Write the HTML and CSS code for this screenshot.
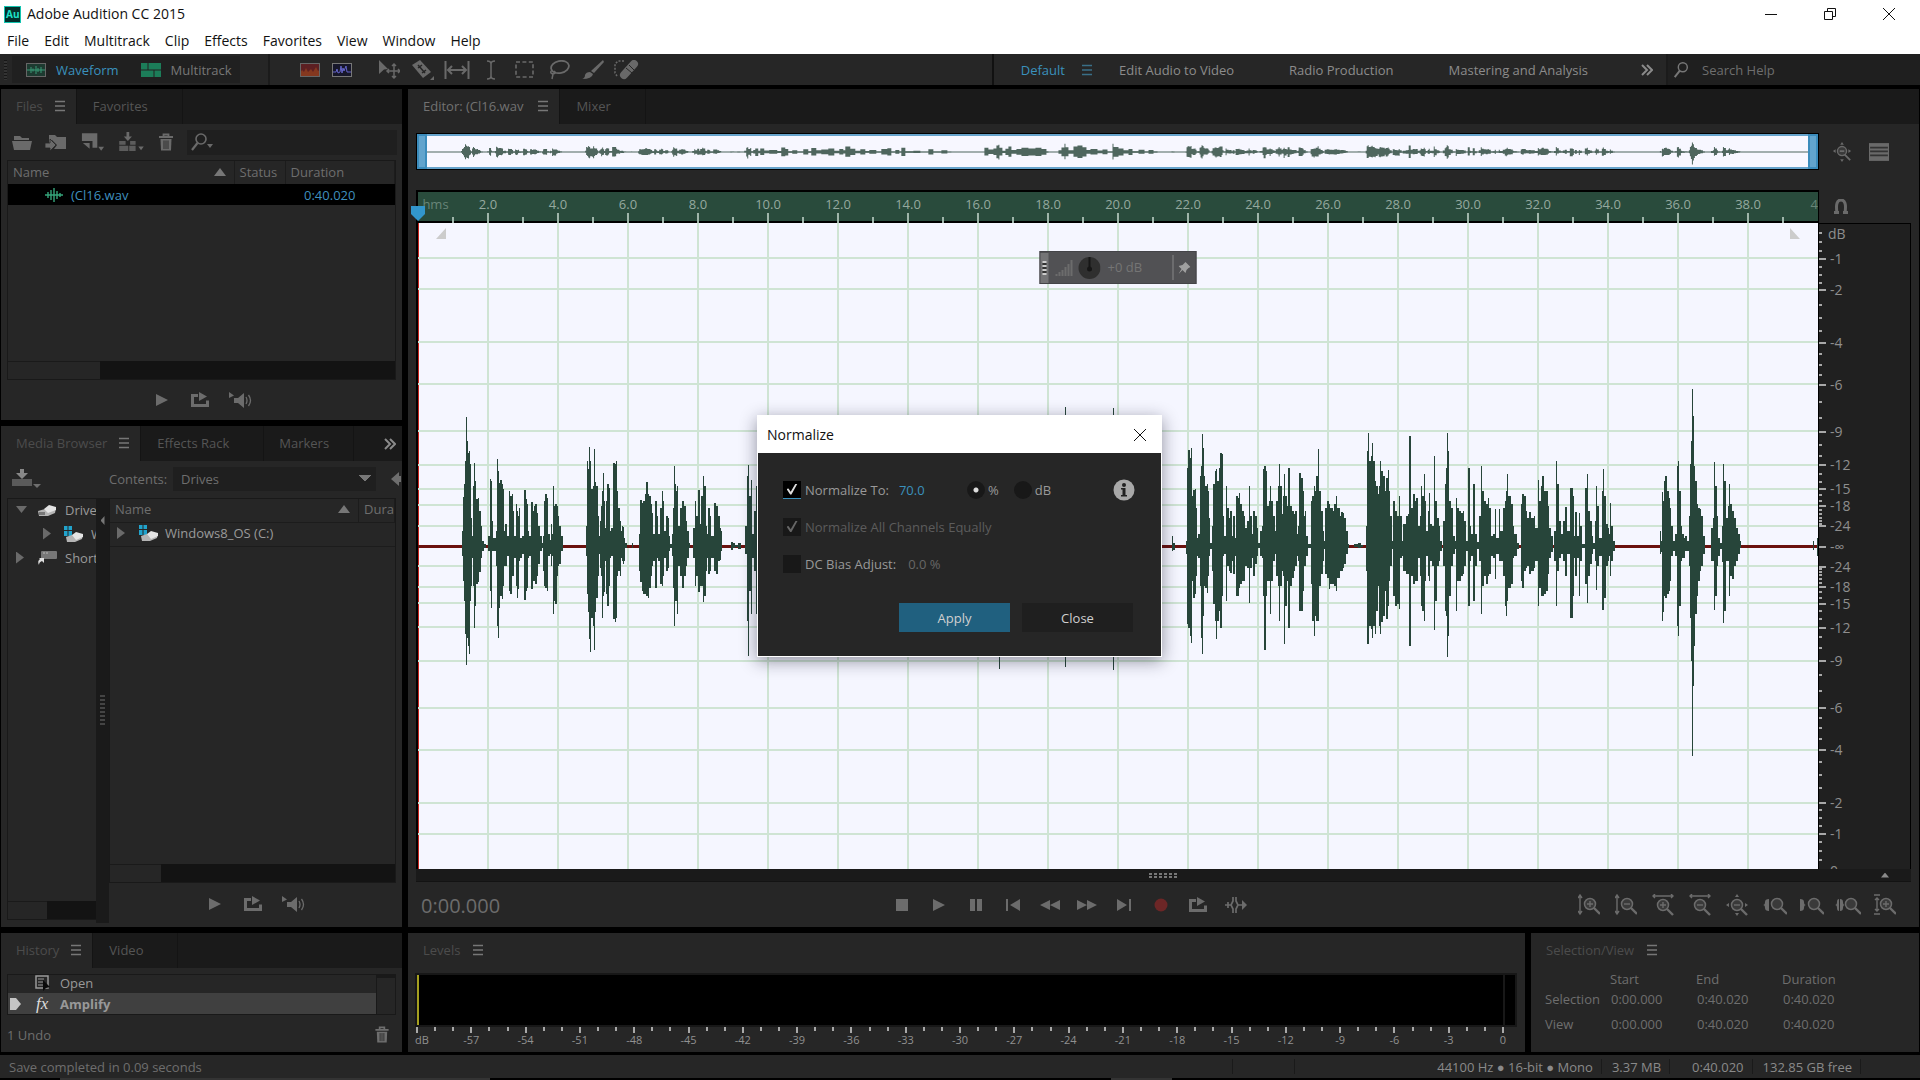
FILE: index.html
```html
<!DOCTYPE html>
<html lang="en">
<head>
  <meta charset="UTF-8" />
  <meta name="viewport" content="width=device-width, initial-scale=1.0" />
  <title>Adobe Audition CC 2015</title>
  <link rel="stylesheet" href="styles.css">
</head>
<body>
  <!-- Shared icons -->
  <svg class="sprite" aria-hidden="true">
    <symbol id="i-menu" viewBox="0 0 10 12"><path d="M0 1.5h10M0 6h10M0 10.5h10" stroke="currentColor" stroke-width="1.4"/></symbol>
    <symbol id="i-play" viewBox="0 0 20 20"><path d="M4 4l12 6-12 6z" fill="currentColor"/></symbol>
    <symbol id="i-loop" viewBox="0 0 20 20"><path d="M8 5.5H2.500v10h15v-5" fill="none" stroke="currentColor" stroke-width="3"/><path d="M9 2l8 4.500-8 4.500z" fill="currentColor"/></symbol>
    <symbol id="i-auto" viewBox="0 0 24 20"><path d="M1 2l5 3.500L1 8z M6 8h4l6-5v15l-6-5H6z" fill="currentColor"/><path d="M18 7q2 3.500 0 7M20.500 5q4 5.500 0 11" fill="none" stroke="currentColor" stroke-width="1.300"/></symbol>
    <symbol id="i-trash" viewBox="0 0 16 18"><path d="M1 4h14M5.500 4V1.500h5V4" fill="none" stroke="currentColor" stroke-width="1.800"/><path d="M2.500 6h11l-.5 11.500H3z" fill="currentColor"/><path d="M6 7.500v8.500M8 7.500v8.500M10 7.500v8.500" stroke="#262626" stroke-width=".9"/></symbol>
    <symbol id="i-search" viewBox="0 0 18 20"><circle cx="11" cy="7" r="5" fill="none" stroke="currentColor" stroke-width="1.600"/><path d="M7.500 11L2 18" stroke="currentColor" stroke-width="2.200"/></symbol>
    <symbol id="i-lens" viewBox="0 0 18 18"><circle cx="7" cy="7" r="5.500" fill="#3a3a3a" stroke="currentColor" stroke-width="1.500"/><path d="M11 11l6 6" stroke="currentColor" stroke-width="2.400"/></symbol>
    <symbol id="i-drive" viewBox="0 0 20 14"><path d="M1 8l7-2 11-1-1 5-7 3H2z" fill="#b4b4b4"/><path d="M7 6l5-4 7 2v3l-8 3z" fill="#e4e4e4"/><path d="M2 9h6v3H2z" fill="#777"/></symbol>
    <symbol id="i-win" viewBox="0 0 20 16"><path d="M1 0h3.500v4H1zM5.500 0H9v4H5.500zM1 5h3.500v5H1zM5.500 5H9v5H5.500z" fill="#21a3cc"/><path d="M3 11l6-2 11-1-1 5-7 3H4z" fill="#b4b4b4"/><path d="M9 9l4-3 7 2v3l-7 3z" fill="#e4e4e4"/></symbol>
  </svg>

  <header class="titlebar">
    <svg class="logo" viewBox="0 0 17 17" aria-hidden="true"><rect width="17" height="17" fill="#12c4b0"/><rect x="1" y="1" width="15" height="15" fill="#03302c"/><text x="2" y="12" class="logo-text">Au</text></svg>
    <span class="app-name">Adobe Audition CC 2015</span>
    <div class="window-buttons">
      <button aria-label="Minimize"><svg viewBox="0 0 14 14"><path d="M1 7.500h12"/></svg></button>
      <button aria-label="Restore"><svg viewBox="0 0 14 14"><path d="M1.500 4.500h8v8h-8zM4.500 4.500v-3h8v8h-3"/></svg></button>
      <button aria-label="Close window"><svg viewBox="0 0 14 14"><path d="M1 1l12 12M13 1L1 13"/></svg></button>
    </div>
  </header>
  <nav class="menubar">
    <button>File</button><button>Edit</button><button>Multitrack</button><button>Clip</button><button>Effects</button><button>Favorites</button><button>View</button><button>Window</button><button>Help</button>
  </nav>

  <div class="toolbar">
    <div class="modes">
      <span class="grip"></span>
      <button class="mode active"><svg viewBox="0 0 20 14"><rect x=".5" y=".5" width="19" height="13" fill="#1d3a30" stroke="#666"/><path d="M1 7h18M5 4v6M7 5.500v3M10 3v8M12 5v4M15 4v6" stroke="#3a9a76"/></svg>Waveform</button>
      <button class="mode"><svg viewBox="0 0 20 14"><rect width="20" height="14" fill="#1c7d59"/><path d="M7 0v7M0 7h20M13 7v7" stroke="#222"/></svg>Multitrack</button>
    </div>
    <div class="tools">
      <button class="swatch" aria-label="Spectral frequency display"><svg viewBox="0 0 20 14"><rect width="20" height="14" fill="#5c1f22"/><path d="M0 14v-4l2-3 2 2 2-4 2 4 3-3 2 3 3-5 2 4 2-1v7z" fill="#84381f"/><rect x=".5" y=".5" width="19" height="13" fill="none" stroke="#666"/></svg></button>
      <button class="swatch" aria-label="Spectral pitch display"><svg viewBox="0 0 20 14"><rect x=".5" y=".5" width="19" height="13" fill="#17172a" stroke="#777"/><path d="M1 9h3l1-3 1 4 2-1 1-6 1 7 1-5 1 3 2-5 1 6h4" fill="none" stroke="#6464c8"/></svg></button>
      <button class="after-swatch" aria-label="Move tool"><svg viewBox="0 0 22 20"><path d="M1 0l9 9-4 .5L1 14z" fill="currentColor"/><path d="M16 4v14M9 11h13M14 6l2-2 2 2M14 16l2 2 2-2M11 9l-2 2 2 2M20 9l2 2-2 2" fill="none" stroke="currentColor" stroke-width="1.500"/></svg></button>
      <button aria-label="Razor tool"><svg viewBox="0 0 22 20"><path d="M0 5l8-5 11 12-8 6z" fill="currentColor"/><path d="M6 5l7 8M6 8l4-3M10 13l4-3" stroke="#262626" stroke-width="1.500"/><path d="M22 16v4h-4z" fill="currentColor"/></svg></button>
      <button aria-label="Slip tool"><svg class="wide" viewBox="0 0 26 20"><path d="M1.500 1v18M24.500 1v18M4 10h18M8 6l-4 4 4 4M18 6l4 4-4 4" fill="none" stroke="currentColor" stroke-width="2"/></svg></button>
      <button aria-label="Time selection tool"><svg viewBox="0 0 22 20"><path d="M7 1q4 0 4 3v12q0 3-4 3M15 1q-4 0-4 3v12q0 3 4 3" fill="none" stroke="currentColor" stroke-width="1.500"/></svg></button>
      <button aria-label="Marquee selection tool"><svg viewBox="0 0 22 20"><rect x="2" y="2" width="17" height="15" fill="none" stroke="currentColor" stroke-width="1.600" stroke-dasharray="4 2.400"/></svg></button>
      <button aria-label="Lasso selection tool"><svg viewBox="0 0 22 20"><ellipse cx="12" cy="7" rx="9" ry="6" transform="rotate(-12 12 7)" fill="none" stroke="currentColor" stroke-width="1.800"/><path d="M4 10q-3 3 1 4 4-1 1-3M5 14l-1 5" fill="none" stroke="currentColor" stroke-width="1.500"/></svg></button>
      <button aria-label="Paintbrush selection tool"><svg viewBox="0 0 22 20"><path d="M21 0l1 2-10 11-3-2z" fill="currentColor"/><path d="M8 12l3 2q-1 5-11 5 3-1 3-4 1-3 5-3z" fill="currentColor"/></svg></button>
      <button aria-label="Spot healing brush"><svg class="wide" viewBox="0 0 26 20"><path d="M10 15L20 4" stroke="currentColor" stroke-width="8" stroke-linecap="round"/><path d="M12 8l6 5M15 5l5 5" stroke="#262626"/><path d="M10 1H4L1 4v9l2 3" fill="none" stroke="currentColor" stroke-width="1.500" stroke-dasharray="2 1.500"/></svg></button>
    </div>
    <div class="workspaces">
      <button class="active">Default</button>
      <button class="panel-menu blue" aria-label="Workspace menu"><svg><use href="#i-menu"/></svg></button>
      <button>Edit Audio to Video</button><button>Radio Production</button><button>Mastering and Analysis</button>
      <button class="more" aria-label="More workspaces"><svg viewBox="0 0 12 12"><path d="M1 1l5 5-5 5M6 1l5 5-5 5"/></svg></button>
    </div>
    <label class="help-search"><svg><use href="#i-search"/></svg><input type="text" placeholder="Search Help" aria-label="Search Help"></label>
  </div>

  <main class="workspace">
    <div class="left-column">
      <section class="panel files">
        <div class="tabs">
          <button class="tab selected">Files<svg><use href="#i-menu"/></svg></button>
          <button class="tab">Favorites</button>
        </div>
        <div class="file-tools">
          <button aria-label="Open file"><svg viewBox="0 0 20 18"><path d="M2 7V3h6l2 2h7v2z M0 8h20l-2 9H2z" fill="currentColor"/></svg></button>
          <button aria-label="Import file"><svg class="import" viewBox="0 0 22 18"><path d="M4 2h6l2 2h9v12H9l3-4-5-5v3H4z" fill="currentColor"/><path d="M0 10h5V6l6 6-6 6v-3H0z" fill="currentColor" stroke="#262626" stroke-width=".8"/></svg></button>
          <button aria-label="New file"><svg class="wide" viewBox="0 0 26 20"><path d="M2 1h16v15h-5V9H2z" fill="currentColor"/><path d="M3 11h7v6z" fill="currentColor"/><path d="M19 15h6l-3 4z" fill="currentColor"/></svg></button>
          <button aria-label="Insert into multitrack"><svg class="insert" viewBox="0 0 27 22"><path d="M0 10h7v4H0zM12 10h6v4h-6zM0 15h10v6H0zM11 15h7v6h-7z" fill="currentColor" opacity=".8"/><path d="M8 0h3v5h3l-4.500 5L5 5h3zM21 16h6l-3 4z" fill="currentColor"/></svg></button>
          <button aria-label="Delete file"><svg class="small"><use href="#i-trash"/></svg></button>
          <label class="file-search"><svg viewBox="0 0 24 20"><circle cx="11" cy="7" r="5" fill="none" stroke="currentColor" stroke-width="1.600"/><path d="M7.500 11L2 18" stroke="currentColor" stroke-width="2.200"/><path d="M17 12h6l-3 4z" fill="currentColor"/></svg><input type="text" aria-label="Search files"></label>
        </div>
        <div class="list-box">
          <table class="file-table">
            <thead><tr><th class="c-name"><div>Name<svg viewBox="0 0 12 8"><path d="M0 8l6-8 6 8z"/></svg></div></th><th class="c-status">Status</th><th>Duration</th></tr></thead>
            <tbody><tr><td><div class="wav"><svg viewBox="0 0 18 14"><path d="M0 7h18M3 4v6M6 2v10M9 0v14M12 3v8M15 5v4" stroke="#35a57b" stroke-width="1.400"/></svg>(Cl16.wav</div></td><td></td><td class="dur">0:40.020</td></tr></tbody>
          </table>
          <div class="hscroll"><span class="thumb"></span></div>
        </div>
        <div class="preview">
          <button aria-label="Play file"><svg><use href="#i-play"/></svg></button>
          <button aria-label="Loop file"><svg><use href="#i-loop"/></svg></button>
          <button aria-label="Auto-play file"><svg class="auto"><use href="#i-auto"/></svg></button>
        </div>
      </section>

      <section class="panel media">
        <div class="tabs">
          <button class="tab selected">Media Browser<svg><use href="#i-menu"/></svg></button>
          <button class="tab effects">Effects Rack</button>
          <button class="tab markers">Markers</button>
          <button class="more" aria-label="More panels"><svg viewBox="0 0 12 12"><path d="M1 1l5 5-5 5M6 1l5 5-5 5"/></svg></button>
        </div>
        <div class="media-tools">
          <button class="shortcut" aria-label="Shortcuts"><svg viewBox="0 0 30 20"><rect y="10" width="20" height="7" fill="#5a5a5a"/><path d="M8 0h4v4h4l-6 6-6-6h4z" fill="#888"/><path d="M21 15h8l-4 4z" fill="currentColor"/></svg></button>
          <label for="contents">Contents:</label>
          <select id="contents"><option>Drives</option></select>
          <button class="back" aria-label="Back"><svg viewBox="0 0 10 14"><path d="M0 7l8-7v4h2v6H8v4z" fill="currentColor"/></svg></button>
        </div>
        <div class="media-body">
          <div class="tree">
            <ul>
              <li><span class="arrow down"></span><svg><use href="#i-drive"/></svg><span class="label">Drives</span></li>
              <li class="child"><span class="arrow"></span><svg><use href="#i-win"/></svg><span class="label">W</span></li>
              <li><span class="arrow"></span><svg viewBox="0 0 20 16"><rect x="4" y="1" width="16" height="8" rx="1" fill="#777"/><path d="M6 3h2M9 3h2" stroke="#bbb"/><path d="M2 8h5v5l-2-2q-3 1-3 4-2-4 1-6z" fill="#ddd"/></svg><span class="label">Shortcuts</span></li>
            </ul>
            <div class="hscroll tree-scroll"><span class="thumb"></span></div>
          </div>
          <div class="divider"><span class="collapse"></span><span class="handle"></span></div>
          <div class="contents">
            <div class="contents-box">
              <table class="drive-table">
                <thead><tr><th><div>Name<svg viewBox="0 0 12 8"><path d="M0 8l6-8 6 8z"/></svg></div></th><th class="c-dura">Duration</th></tr></thead>
                <tbody><tr><td colspan="2"><div class="drive"><span class="arrow"></span><svg><use href="#i-win"/></svg>Windows8_OS (C:)</div></td></tr></tbody>
              </table>
              <div class="hscroll drive-scroll"><span class="thumb"></span></div>
            </div>
            <div class="preview">
              <button aria-label="Play media"><svg><use href="#i-play"/></svg></button>
              <button aria-label="Loop media"><svg><use href="#i-loop"/></svg></button>
              <button aria-label="Auto-play media"><svg class="auto"><use href="#i-auto"/></svg></button>
            </div>
          </div>
        </div>
      </section>
    </div>

    <section class="panel editor">
      <div class="tabs">
        <button class="tab selected light">Editor: (Cl16.wav<svg><use href="#i-menu"/></svg></button>
        <button class="tab">Mixer</button>
      </div>
      <div class="editor-grid">
        <div class="overview">
          <svg viewBox="0 0 1400 30" preserveAspectRatio="none"><path id="overviewPath" transform="translate(0 15) scale(1 .06)"/><path d="M0 15h1400" class="overview-line"/></svg>
          <span class="ov-handle"></span><span class="ov-handle right"></span>
        </div>
        <div class="overview-tools">
          <button aria-label="Zoom out full"><svg viewBox="0 0 20 22"><circle cx="10" cy="10" r="5" fill="#3a3a3a" stroke="currentColor" stroke-width="1.500"/><path d="M7.500 10h5M13 14l6 6" stroke="currentColor" stroke-width="2"/><path d="M8 3l2-3 2 3zM8 19l2 3 2-3zM3 8l-3 2 3 2zM17 8l3 2-3 2z" fill="currentColor"/></svg></button>
          <button aria-label="Display options"><svg viewBox="0 0 18 18"><rect x="0" y="1" width="18" height="16" fill="currentColor"/><path d="M1 5h16M1 8.500h16M1 12h16" stroke="#333" stroke-width="1.500"/></svg></button>
        </div>

        <div class="time-ruler">
          <div class="time-labels" id="timeLabels"></div>
          <svg id="timeTicks"></svg>
          <svg class="playhead" viewBox="0 0 16 15"><path d="M1 0h14v8l-7 7-7-7z"/></svg>
        </div>
        <div class="snap"><button aria-label="Toggle snapping"><svg viewBox="0 0 14 16"><path d="M3 14q-2-13 4-13t4 13" fill="none" stroke="currentColor" stroke-width="3"/><path d="M0 12h5v3H0zM9 12h5v3H9z" fill="currentColor"/></svg></button></div>

        <div class="wave">
          <svg id="grid"></svg>
          <svg viewBox="0 -323 1400 646" preserveAspectRatio="none"><path id="wavePath"/></svg>
          <span class="fade left"></span><span class="fade right"></span>
          <div class="hud">
            <span class="hud-grip"></span>
            <svg viewBox="0 0 46 28"><path d="M2 22v-2M5 22v-4M8 22v-6M11 22v-9M14 22v-12M17 22V6" stroke="#6c6c6c" stroke-width="2"/><circle cx="35" cy="14" r="11" fill="#2f2f2f"/><path d="M35 3v10" stroke="#161616" stroke-width="2"/><circle cx="35" cy="15" r="2.500" fill="#161616"/></svg>
            <span class="gain">+0 dB</span>
            <button aria-label="Pin"><svg viewBox="0 0 12 12"><path d="M7 0l5 5-2 1-2 2-1 3-3-3-4 4 3-5-3-3 4-1 2-2z"/></svg></button>
          </div>
        </div>
        <div class="db-ruler"><svg id="dbRuler"></svg></div>
        <div class="strip"><span class="strip-grip"></span><span class="strip-arrow"></span></div>
      </div>

      <div class="transport">
        <span class="time">0:00.000</span>
        <div class="transport-buttons">
          <button aria-label="Stop"><svg viewBox="0 0 20 20"><path d="M4 4h12v12H4z" fill="currentColor"/></svg></button>
          <button aria-label="Play"><svg><use href="#i-play"/></svg></button>
          <button aria-label="Pause"><svg viewBox="0 0 20 20"><path d="M4 4h5v12H4zM11 4h5v12h-5z" fill="currentColor"/></svg></button>
          <button aria-label="Previous"><svg viewBox="0 0 20 20"><path d="M3 4h2v12H3zM17 4v12l-10-6z" fill="currentColor"/></svg></button>
          <button aria-label="Rewind"><svg viewBox="0 0 20 20"><path d="M10 5v10l-10-5zM20 5v10l-10-5z" fill="currentColor"/></svg></button>
          <button aria-label="Fast forward"><svg viewBox="0 0 20 20"><path d="M0 5v10l10-5zM10 5v10l10-5z" fill="currentColor"/></svg></button>
          <button aria-label="Next"><svg viewBox="0 0 20 20"><path d="M15 4h2v12h-2zM3 4v12l10-6z" fill="currentColor"/></svg></button>
          <button class="record" aria-label="Record"><svg viewBox="0 0 20 20"><circle cx="10" cy="10" r="6.500" fill="currentColor"/></svg></button>
          <button aria-label="Loop"><svg><use href="#i-loop"/></svg></button>
          <button aria-label="Skip selection"><svg class="skip" viewBox="0 0 22 20"><path d="M0 10h6M3 7v6M8 2v4l-2 4 2 4v4M11 2v4l2 4-2 4v4M13 10h6" fill="none" stroke="currentColor" stroke-width="1.700"/><path d="M17 5l5 5-5 5z" fill="currentColor"/></svg></button>
        </div>
        <div class="zoom-buttons">
          <button aria-label="Zoom in amplitude"><svg viewBox="0 0 22 22"><path d="M2 2v17M0 4l2-3 2 3M0 17l2 3 2-3" class="thin"/><use href="#i-lens" x="5" y="3" width="18" height="18"/><path d="M9 10h6M12 7v6" class="thin"/></svg></button>
          <button aria-label="Zoom out amplitude"><svg viewBox="0 0 22 22"><path d="M2 2v17M0 4l2-3 2 3M0 17l2 3 2-3" class="thin"/><use href="#i-lens" x="5" y="3" width="18" height="18"/><path d="M9 10h6" class="thin"/></svg></button>
          <button aria-label="Zoom in time"><svg viewBox="0 0 22 22"><path d="M1 2h20M3 0L1 2l2 2M19 0l2 2-2 2" class="thin"/><use href="#i-lens" x="4" y="4" width="18" height="18"/><path d="M8 11h6M11 8v6" class="thin"/></svg></button>
          <button aria-label="Zoom out time"><svg viewBox="0 0 22 22"><path d="M1 2h20M3 0L1 2l2 2M19 0l2 2-2 2" class="thin"/><use href="#i-lens" x="4" y="4" width="18" height="18"/><path d="M8 11h6" class="thin"/></svg></button>
          <button aria-label="Zoom full"><svg viewBox="0 0 22 22"><path d="M9 3l2-3 2 3zM9 19l2 3 2-3zM3 9l-3 2 3 2zM19 9l3 2-3 2z" fill="currentColor"/><use href="#i-lens" x="4" y="4" width="18" height="18"/><path d="M8 11h6" class="thin"/></svg></button>
          <button aria-label="Zoom in point"><svg class="wide" viewBox="0 0 26 22"><path d="M8 5q-4 0-4 3 0 3-2 3 2 0 2 3 0 3 4 3z" fill="currentColor"/><use href="#i-lens" x="9" y="3" width="18" height="18"/></svg></button>
          <button aria-label="Zoom out point"><svg class="wide" viewBox="0 0 26 22"><path d="M2 5q4 0 4 3 0 3 2 3-2 0-2 3 0 3-4 3z" fill="currentColor"/><use href="#i-lens" x="9" y="3" width="18" height="18"/></svg></button>
          <button aria-label="Zoom to selection"><svg class="wide" viewBox="0 0 26 22"><path d="M4 5q-2 0-2 3 0 3-2 3 2 0 2 3 0 3 2 3zM5 5q3 0 3 3 0 3 2 3-2 0-2 3 0 3-3 3z" fill="currentColor"/><use href="#i-lens" x="9" y="3" width="18" height="18"/></svg></button>
          <button aria-label="Zoom to channel"><svg viewBox="0 0 22 22"><path d="M0 1h6M0 20h6M3 4v13M1 6l2-2 2 2M1 15l2 2 2-2" class="thin"/><use href="#i-lens" x="5" y="3" width="18" height="18"/><path d="M9 10h6M12 7v6" class="thin"/></svg></button>
        </div>
      </div>
    </section>

    <section class="panel history">
      <div class="tabs">
        <button class="tab selected">History<svg><use href="#i-menu"/></svg></button>
        <button class="tab">Video</button>
      </div>
      <div class="history-box">
        <ul>
          <li><span class="state"></span><svg viewBox="0 0 16 16"><path d="M1 1h12v12H1z" fill="none" stroke="#999" stroke-width="1.500"/><path d="M3 4h6M3 7h6M3 10h5" stroke="#999"/><path d="M8 5l7 7-4 1-3 3z" fill="#0a0a0a"/></svg>Open</li>
          <li class="current"><span class="state"><svg viewBox="0 0 11 12"><path d="M0 0h6l5 6-5 6H0z" fill="#c4c4c4"/></svg></span><i class="fx">fx</i>Amplify</li>
        </ul>
        <div class="vscroll"></div>
      </div>
      <div class="history-foot"><span>1 Undo</span><button aria-label="Delete history"><svg><use href="#i-trash"/></svg></button></div>
    </section>

    <div class="bottom-right">
      <section class="panel levels">
        <h2>Levels<svg><use href="#i-menu"/></svg></h2>
        <div class="meter"></div>
        <div class="meter-scale"><svg id="levelScale"></svg></div>
      </section>
      <section class="panel selection">
        <h2>Selection/View<svg><use href="#i-menu"/></svg></h2>
        <table>
          <thead><tr><td></td><th>Start</th><th>End</th><th>Duration</th></tr></thead>
          <tbody>
            <tr><th>Selection</th><td>0:00.000</td><td>0:40.020</td><td>0:40.020</td></tr>
            <tr class="view"><th>View</th><td>0:00.000</td><td>0:40.020</td><td>0:40.020</td></tr>
          </tbody>
        </table>
      </section>
    </div>
  </main>

  <footer class="statusbar">
    <span class="message">Save completed in 0.09 seconds</span>
    <span class="cell empty"></span>
    <span class="cell format">44100 Hz ● 16-bit ● Mono</span>
    <span class="cell">3.37 MB</span>
    <span class="cell length">0:40.020</span>
    <span class="cell">132.85 GB free</span>
  </footer>
  <div class="taskbar-edge"></div>

  <form class="dialog" role="dialog" aria-labelledby="dialogTitle" onsubmit="return false">
    <div class="dialog-title"><span id="dialogTitle">Normalize</span><button type="button" aria-label="Close dialog"><svg viewBox="0 0 14 14"><path d="M1 1l12 12M13 1L1 13"/></svg></button></div>
    <div class="dialog-body">
      <div class="row">
        <input type="checkbox" id="normTo" class="focus" checked><label for="normTo">Normalize To:</label>
        <input type="text" class="amount" value="70.0" aria-label="Normalize amount">
        <input type="radio" name="unit" id="pct" checked><label for="pct">%</label>
        <input type="radio" name="unit" id="db"><label for="db">dB</label>
        <svg class="info" viewBox="0 0 22 22"><circle cx="11" cy="11" r="10.500" fill="#a8a8a8"/><circle cx="11" cy="6" r="2" fill="#222"/><path d="M8 9h4.500v7H14v1.500H8V16h1.500v-5.500H8z" fill="#222"/></svg>
      </div>
      <div class="row"><input type="checkbox" id="allCh" checked disabled><label for="allCh">Normalize All Channels Equally</label></div>
      <div class="row"><input type="checkbox" id="dcBias"><label for="dcBias">DC Bias Adjust:</label><input type="text" class="bias" value="0.0 %" aria-label="DC bias" disabled></div>
      <div class="dialog-buttons"><button type="submit" class="primary">Apply</button><button type="button">Close</button></div>
    </div>
  </form>

  <script>
    // Peaks as "x,up,down"; each one holds until the next x
    const peaks = `0,0,0 44,15,10 45,49,35 46,62,55 47,85,88 48,129,119 49,105,92 50,93,100 51,95,108 52,82,55 53,28,40 54,10,12 55,60,40 56,83,82 57,65,60 58,47,38 60,48,36 61,35,26 63,20,12 64,5,5 66,2,2 68,0,0
      70,10,5 72,67,45 73,65,62 74,25,5 75,8,5 78,15,20 79,87,80 80,75,92 81,63,62 82,66,50 84,62,53 85,57,40 86,15,20 87,22,20 89,10,10 91,55,45 92,50,48 94,52,30 95,35,30 96,10,12 98,42,40 99,35,52 100,30,43 101,38,15 102,8,12 104,10,8 106,56,54 108,47,45 109,42,42 110,15,12 111,10,10 113,44,43 115,35,35 116,40,35 117,42,38 119,33,30 120,20,18 122,10,5 124,3,2 125,10,25 126,45,40 127,52,42 129,48,45 130,12,10 132,6,8 133,22,20 134,12,10 135,60,68 136,40,55 137,42,58 139,40,30 140,30,20 141,20,18 143,10,5 145,0,0
      168,20,10 169,85,48 170,77,66 171,99,93 172,85,106 173,57,72 175,60,80 176,97,104 177,64,66 178,60,52 180,30,30 181,10,8 182,25,22 183,40,30 184,55,72 185,73,50 186,45,46 187,18,15 188,45,48 189,62,60 191,58,40 192,15,12 193,18,10 195,83,73 197,82,76 198,85,72 199,55,30 200,38,25 202,25,30 203,15,12 204,20,15 205,19,18 206,8,15 207,3,2 209,0,0 214,3,2 215,0,0
      221,12,25 222,46,36 224,43,45 225,45,48 227,52,48 228,64,50 230,52,52 231,50,42 233,42,30 234,33,20 235,12,15 237,45,42 239,30,12 240,12,15 242,38,38 244,55,40 245,45,30 246,15,12 248,30,25 250,28,22 251,10,5 252,2,2 254,12,10 255,38,42 256,80,80 257,62,55 258,55,55 259,60,68 260,20,20 262,38,30 264,45,42 266,40,30 268,25,20 269,15,12 271,3,2 272,0,0 275,18,12 277,45,40 278,30,30 280,56,46 282,22,40 283,50,40 285,70,56 286,60,50 288,20,25 289,12,12 290,38,28 292,30,25 293,10,12 296,43,25 298,40,28 300,30,15 302,18,14 303,15,5 304,0,0 313,4,4 315,3,2 317,1,1 320,3,3 323,0,0
      327,20,8 329,70,75 330,81,110 331,50,45 333,66,68 334,12,12 336,35,25 338,60,68 341,20,20 343,60,50 347,25,20 352,32,28 360,18,16 364,75,70 368,50,60 371,12,12 375,30,28 380,8,8 386,45,40 391,14,14 394,66,58 399,28,24 404,40,36 411,60,60 417,20,20 422,48,40 426,28,24 428,90,80 433,55,50 438,20,20 443,45,40 448,16,14 452,35,30 459,8,8 464,48,40 470,62,58 474,10,10 478,35,30 482,8,8 484,72,66 488,12,12 496,20,18 503,5,5 511,45,40 516,10,10 524,30,26 530,3,3 534,0,0
      567,70,60 571,40,35 576,60,50 579,110,105 581,122,123 582,70,60 585,20,18 588,55,50 591,90,80 594,35,30 599,50,45 604,72,68 611,60,60 618,72,66 624,50,45 629,10,10 631,0,0 641,30,30 644,75,70 647,139,121 648,80,70 651,30,30 656,90,80 660,110,100 665,80,75 669,35,30 673,48,40 680,25,20 685,40,36 690,8,8 695,138,124 696,85,80 701,60,60 706,30,26 711,52,50 715,12,12 721,36,30 727,8,8 731,35,30 736,10,10 740,0,0 754,10,5 755,3,4 757,0,0
      768,5,8 769,78,78 770,96,82 772,88,90 773,98,97 774,50,35 775,56,52 777,57,48 778,38,30 779,8,10 780,12,12 782,70,40 783,80,92 784,112,108 785,98,70 786,70,40 787,60,42 789,62,47 790,55,30 791,28,10 792,3,3 794,20,25 795,62,58 797,75,75 798,77,93 799,65,75 801,78,65 802,93,82 804,92,50 805,30,10 806,10,8 808,60,55 809,38,20 811,28,25 812,35,27 814,10,15 815,30,28 817,8,10 818,50,50 820,48,50 821,53,42 822,42,38 824,35,35 826,30,35 827,18,20 829,25,22 831,60,57 832,30,22 834,12,12 835,35,30 837,30,18 839,18,10 840,3,2 842,15,10 844,20,12 845,77,50 846,80,104 848,75,50 849,40,35 851,45,35 852,60,68 853,45,35 855,30,15 857,15,8 858,45,30 860,60,40 861,82,75 862,60,40 864,32,25 865,50,30 866,72,98 867,50,60 869,40,35 870,78,82 872,40,40 874,35,32 876,32,25 877,35,20 879,12,10 880,20,15 881,73,65 883,68,65 885,55,45 886,30,20 887,35,20 888,10,10 890,2,2
      893,45,38 894,50,75 896,60,90 897,55,70 898,70,75 900,97,75 901,55,40 903,35,28 905,15,15 906,5,3 907,38,28 909,45,32 911,42,43 912,38,38 915,35,38 916,42,40 918,50,45 919,38,32 922,30,25 923,34,25 925,33,22 926,28,18 928,15,8 930,2,2 931,0,0 936,2,1 940,3,2 943,1,1 945,0,0
      948,20,25 949,95,98 950,113,98 951,85,80 953,90,83 954,103,92 955,85,80 957,65,88 958,60,65 960,52,40 961,60,80 962,85,88 963,75,76 965,70,70 967,55,45 968,68,73 970,76,60 971,55,35 972,30,20 974,5,3 975,45,50 977,35,60 979,30,58 981,50,63 982,30,12 984,5,10 985,22,25 988,30,28 990,32,28 991,110,100 993,38,30 995,52,38 997,45,35 998,48,35 1000,20,12 1002,30,30 1003,60,60 1004,50,65 1006,72,75 1007,45,35 1008,15,10 1010,35,30 1011,53,35 1012,22,15 1014,20,20 1016,90,84 1017,45,55 1019,28,20 1021,20,15 1022,5,5 1024,0,0 1025,25,20 1027,62,65 1028,78,70 1029,113,111 1030,95,90 1031,45,50 1033,38,20 1035,10,8 1037,5,3 1038,48,65 1039,38,35 1041,35,35 1043,33,30 1045,35,28 1046,25,20 1048,5,5 1050,78,60 1052,20,15 1053,12,10 1055,62,55 1057,12,20 1059,4,3
      1061,30,15 1063,80,68 1064,55,40 1066,45,30 1068,42,38 1070,48,30 1071,38,28 1073,10,10 1075,12,12 1077,37,33 1078,8,8 1081,37,15 1082,15,15 1085,38,30 1087,45,60 1088,55,70 1089,72,55 1090,50,42 1093,42,38 1095,20,12 1096,12,10 1099,3,3 1101,0,0 1103,42,35 1104,52,42 1106,50,25 1108,35,22 1109,28,20 1111,34,28 1113,28,25 1116,30,22 1117,18,15 1120,66,60 1121,45,42 1123,60,50 1124,70,50 1126,55,48 1128,55,45 1130,40,28 1131,18,12 1133,10,6 1135,0,0 1136,15,15 1138,85,60 1139,62,25 1141,25,12 1143,12,8 1145,25,15 1147,39,30 1149,15,8 1152,58,72 1155,50,50 1156,10,12 1157,34,30 1159,10,12 1161,33,50 1162,20,15 1164,2,2
      1167,58,38 1169,72,57 1170,35,30 1172,25,18 1174,10,8 1175,3,3 1177,25,15 1178,60,44 1179,40,20 1181,8,10 1184,55,64 1185,77,64 1186,50,52 1188,22,20 1190,18,15 1191,12,10 1192,43,30 1193,20,15 1195,5,5 1197,0,0
      1242,15,8 1243,5,6 1244,54,75 1245,45,66 1246,65,50 1247,70,52 1249,55,48 1251,48,45 1252,38,35 1253,20,10 1255,5,5 1257,12,10 1259,80,80 1260,85,90 1261,55,60 1263,20,15 1264,12,12 1266,8,12 1267,10,5 1269,5,5 1271,30,20 1272,82,72 1273,105,115 1274,157,210 1275,130,140 1276,80,100 1277,65,68 1279,42,50 1280,38,35 1282,37,25 1283,30,20 1285,10,8 1287,0,0 1293,18,15 1295,28,15 1296,84,64 1297,60,50 1299,30,20 1300,8,10 1302,3,3 1304,20,16 1305,82,77 1306,65,65 1308,28,15 1310,40,15 1311,62,50 1312,42,30 1314,35,33 1316,28,20 1318,18,15 1320,12,8 1322,5,2 1323,0,0 1395,5,4 1396,0,0 1399,8,10 1400,0,0`
      .split(/\s+/).map(p => p.split(',').map(Number));

    let path = '';
    for (let i = 0; i < peaks.length - 1; i++) {
      const [x, up, down] = peaks[i];
      if (up) path += `M${x} ${-up}H${peaks[i + 1][0]}V${down}H${x}Z`;
    }
    document.getElementById('wavePath').setAttribute('d', path);
    document.getElementById('overviewPath').setAttribute('d', path);

    // Position of a level in percent of the height, side is -1 (upper) or 1 (lower)
    const levelY = (db, side) => (50 + side * 50 * Math.pow(10, db / 20)) + '%';
    const line = (x1, y1, x2, y2, cls) => `<line x1="${x1}" y1="${y1}" x2="${x2}" y2="${y2}" class="${cls}"/>`;

    const labels = [1, 2, 4, 6, 9, 12, 15, 18, 24];
    const minor = [.25, .5, .75, 1.25, 1.5, 1.75, 2.5, 3, 3.5, 4.5, 5, 5.5, 7, 8, 10, 11, 13, 14, 16, 17, 19, 20, 21, 22, 23];
    let grid = '';
    let ruler = '<text x="9" y="15">dB</text><text x="11" y="100%" dy="7">0</text>';
    for (let s = 2; s <= 38; s += 2) grid += line(s / .4 + '%', 0, s / .4 + '%', '100%', 'grid-v');
    for (const side of [-1, 1]) {
      for (const n of labels) {
        const y = levelY(-n, side);
        grid += line(0, y, '100%', y, 'grid-h');
        ruler += line(0, y, 7, y, 'tick') + `<text x="11" y="${y}" dy="5">-${n}</text>`;
      }
      for (const n of minor) ruler += line(0, levelY(-n, side), 3, levelY(-n, side), 'tick');
    }
    grid += line(0, '50%', '100%', '50%', 'zero');
    ruler += line(0, '50%', 7, '50%', 'tick') + '<text x="11" y="50%" dy="5">-∞</text>';
    document.getElementById('grid').innerHTML = grid;
    document.getElementById('dbRuler').innerHTML = ruler;

    let times = '<span class="edge">hms</span>';
    let ticks = '';
    for (let s = 2; s <= 38; s += 2) times += `<span>${s}.0</span>`;
    for (let s = 1; s < 40; s++) ticks += line(s / .4 + '%', s % 2 ? 27 : 23, s / .4 + '%', 33, 'tick');
    document.getElementById('timeLabels').innerHTML = times + '<span class="edge last">4</span>';
    document.getElementById('timeTicks').innerHTML = ticks;

    let scale = '<text x="-2" y="17">dB</text>';
    for (let i = 0; i <= 60; i++) {
      const x = i / .6 + '%';
      scale += line(x, 0, x, i % 3 ? 4 : 6, 'tick');
      if (i % 3 === 0 && i) scale += `<text x="${x}" y="17" class="mid">${i - 60}</text>`;
    }
    document.getElementById('levelScale').innerHTML = scale;
  </script>
</body>
</html>
```
FILE: styles.css
```css
* { box-sizing: border-box; }
body {
  margin: 0;
  min-height: 100vh;
  display: flex;
  flex-direction: column;
  position: relative;
  background: #000;
  color: #6e6e6e;
  font: 13px/18px "Open Sans", "Noto Sans", sans-serif;
  overflow: hidden;
}
button {
  background: none;
  border: 0;
  padding: 0;
  color: inherit;
  font: inherit;
  display: flex;
  align-items: center;
  justify-content: center;
}
input, select { font: inherit; color: inherit; background: none; border: 0; margin: 0; padding: 0; min-width: 0; }
ul { list-style: none; margin: 0; padding: 0; }
svg { display: block; flex: none; }
.sprite { position: absolute; width: 0; height: 0; }
table { border-collapse: collapse; }
th { font-weight: normal; text-align: left; }
th, td { padding: 0; }

/* Window frame */
.titlebar {
  display: flex;
  align-items: center;
  height: 28px;
  padding-left: 4px;
  background: #fff;
  color: #111;
  font-size: 14px;
}
.logo { width: 17px; height: 17px; margin-right: 6px; }
.logo-text { font-size: 10px; font-weight: bold; fill: #1ee0c8; }
.window-buttons { display: flex; margin-left: auto; margin-right: 2px; }
.window-buttons button { width: 59px; height: 28px; }
.window-buttons svg, .dialog-title svg { width: 14px; height: 14px; fill: none; stroke: #111; }
.menubar {
  display: flex;
  gap: 15px;
  height: 26px;
  padding: 0 7px;
  background: #fff;
  color: #111;
  font-size: 14px;
}

/* Toolbar */
.toolbar {
  display: flex;
  align-items: stretch;
  height: 31px;
  background: #262626;
  color: #777;
}
.modes {
  display: flex;
  align-items: center;
  width: 270px;
  border-right: 2px solid #1b1b1b;
  padding: 2px 0;
}
.grip { width: 3px; height: 20px; margin: 0 5px 0 4px; background: repeating-linear-gradient(#161616 0 1px, #333 1px 3px); }
.mode { height: 27px; padding-left: 14px; padding-right: 8px; gap: 10px; background: #202020; }
.mode svg { width: 20px; height: 14px; }
.mode.active, .workspaces .active { color: #3a91bd; }
.tools { display: flex; align-items: center; gap: 12px; padding-left: 30px; color: #696969; }
.tools svg { width: 22px; height: 20px; }
.tools .swatch svg { width: 20px; height: 14px; }
.tools svg.wide { width: 26px; margin: 0 -2px; }
.after-swatch { margin-left: 14px; }
.workspaces {
  display: flex;
  align-items: center;
  margin-left: auto;
  border-left: 2px solid #111;
  padding-left: 27px;
  color: #8c8c8c;
}
.workspaces button { margin-right: 55px; }
.workspaces button.active { margin-right: 17px; }
.workspaces button.panel-menu { margin-right: 27px; color: #3a6f88; }
.workspaces button.more { margin-right: 13px; margin-left: -2px; }
.panel-menu svg { width: 10px; height: 12px; }
.more svg { width: 12px; height: 12px; fill: none; stroke: #8a8a8a; stroke-width: 2; }
.help-search {
  display: flex;
  align-items: center;
  gap: 12px;
  width: 254px;
  border-left: 2px solid #1b1b1b;
  padding-left: 4px;
  background: #1f1f1f;
}
.help-search svg { width: 18px; height: 18px; }
.help-search input { flex: 1; }
.help-search input::placeholder { color: #6e6e6e; opacity: 1; }

/* Panels */
.workspace {
  flex: 1;
  display: grid;
  grid-template: 1fr 119px / 401px 1fr;
  gap: 6px;
  padding: 4px 1px 3px;
  min-height: 0;
}
.left-column { display: flex; flex-direction: column; gap: 6px; min-height: 0; }
.panel { background: #262626; display: flex; flex-direction: column; min-width: 0; min-height: 0; overflow: hidden; }
.files { flex: 0 0 331px; }
.media { flex: 1; }
.tabs { display: flex; flex: none; height: 35px; background: #1a1a1a; }
.tab { padding: 0 34px 2px 16px; border-right: 1px solid #141414; color: #555; }
.tab.selected { background: #262626; color: #4c4c4c; padding: 0 11px 2px 15px; gap: 12px; }
.tab.light { color: #727272; gap: 15px; }
.tab svg, h2 svg { width: 10px; height: 12px; color: #777; }
h2 {
  display: flex;
  align-items: center;
  gap: 13px;
  height: 35px;
  margin: 0;
  padding: 0 0 2px 15px;
  font-size: 13px;
  font-weight: normal;
  color: #4c4c4c;
}

.file-tools { display: flex; align-items: center; flex: none; height: 36px; padding: 0 5px 0 11px; gap: 13px; color: #6a6a6a; }
.file-tools svg { width: 20px; height: 18px; }
.file-tools svg.import { width: 22px; }
.file-tools svg.wide { width: 25px; height: 20px; }
.file-tools svg.insert { width: 27px; height: 20px; }
.file-tools svg.small { width: 16px; }
.file-search { display: flex; align-items: center; flex: 1; height: 25px; background: #1f1f1f; padding-left: 3px; }
.file-search svg { width: 24px; height: 20px; }
.file-search input { flex: 1; }
.list-box { flex: 1; display: flex; flex-direction: column; margin: 0 6px; border: 1px solid #191919; }
.file-table, .drive-table { width: 100%; table-layout: fixed; }
.file-table th, .drive-table th { height: 23px; border-right: 1px solid #1c1c1c; padding: 0 0 2px 5px; overflow: hidden; white-space: nowrap; }
th div { display: flex; align-items: center; justify-content: space-between; padding-right: 8px; }
th div svg { width: 12px; height: 8px; fill: #777; }
.c-name { width: 226px; }
.c-status { width: 51px; }
.file-table td { height: 21px; background: #000; color: #3f8fbe; }
.wav { display: flex; align-items: center; gap: 8px; padding-left: 37px; }
.wav svg { width: 18px; height: 14px; }
.file-table td.dur { padding-left: 19px; }
.hscroll { height: 18px; margin-top: auto; background: #131313; }
.thumb { display: block; width: 92px; height: 100%; background: #262626; border-top: 1px solid #1a1a1a; }
.preview { display: flex; align-items: center; justify-content: center; flex: none; height: 40px; gap: 18px; color: #6c6c6c; }
.preview svg { width: 20px; height: 20px; }
.preview svg.auto { width: 24px; }

/* Media browser */
.tab.effects { padding-right: 34px; }
.tab.markers { padding: 0 24px 2px 15px; }
.tabs .more { margin-left: auto; width: 24px; }
.media-tools { display: flex; align-items: center; flex: none; height: 37px; padding: 0 0 2px 11px; overflow: hidden; }
.media-tools svg { width: 30px; height: 20px; }
.media-tools label { margin-left: 67px; width: 64px; }
.media-tools select {
  flex: none;
  width: 203px;
  height: 24px;
  padding-left: 8px;
  appearance: none;
  background: linear-gradient(to bottom right, #777 50%, transparent 50%) right 5px center / 6px 7px no-repeat, linear-gradient(to bottom left, #777 50%, transparent 50%) right 11px center / 6px 7px no-repeat, #1f1f1f;
}
.back { margin-left: 15px; }
.media-tools .back svg { width: 10px; height: 14px; }
.media-body { flex: 1; display: flex; min-height: 0; padding: 0 6px 4px 6px; color: #9a9a9a; }
.tree { flex: none; width: 89px; display: flex; flex-direction: column; margin-bottom: 3px; border: 1px solid #191919; border-right: 0; overflow: hidden; }
.tree li { display: flex; align-items: center; height: 24px; padding-left: 8px; padding-bottom: 3px; gap: 8px; white-space: nowrap; }
.tree li svg { width: 20px; height: 16px; margin-left: 5px; }
.tree li.child { padding-left: 35px; }
.tree li.child svg { margin-left: 4px; }
.label { flex: 1; min-width: 0; overflow: hidden; }
.arrow { flex: none; width: 8px; height: 12px; background: #6a6a6a; clip-path: polygon(0 0, 100% 50%, 0 100%); }
.arrow.down { width: 11px; height: 7px; margin-right: -3px; clip-path: polygon(0 0, 100% 0, 50% 100%); }
.tree-scroll .thumb { width: 39px; }
.divider { flex: none; width: 13px; display: flex; flex-direction: column; align-items: center; justify-content: space-between; padding: 18px 0 198px; background: #1a1a1a; }
.collapse { width: 4px; height: 9px; background: #777; clip-path: polygon(100% 0, 100% 100%, 0 50%); }
.handle { width: 5px; height: 30px; background: repeating-linear-gradient(#444 0 2px, #1a1a1a 2px 4px); }
.contents { flex: 1; min-width: 0; display: flex; flex-direction: column; }
.contents .preview { padding-top: 2px; padding-left: 4px; }
.contents-box { flex: 1; display: flex; flex-direction: column; border: 1px solid #191919; }
.drive-table th { color: #6e6e6e; }
.c-dura { width: 36px; }
.drive-table td { height: 24px; padding-bottom: 2px; border: solid #1c1c1c; border-width: 1px 0; }
.drive { display: flex; align-items: center; gap: 7px; padding-left: 7px; }
.drive svg { width: 20px; height: 16px; margin-left: 6px; }
.drive-scroll .thumb { width: 51px; }

/* Editor */
.editor-grid {
  flex: 1;
  min-height: 0;
  display: grid;
  grid-template: 57px 33px 1fr 13px / 1fr 92px;
  margin: 9px 8px 0;
}
.overview {
  position: relative;
  height: 37px;
  border: 1px solid #000;
  background: #f7f7ff;
  box-shadow: inset 0 2px #66a3cb, inset 0 -2px #66a3cb;
  display: flex;
  align-items: center;
}
.overview svg { width: 100%; height: 30px; fill: #4f665e; }
.overview-line { stroke: #4f665e; }
.ov-handle { position: absolute; top: 0; bottom: 0; left: 0; width: 10px; background: #62a4cd; border: 2px solid #3b8cbc; }
.ov-handle.right { left: auto; right: 0; }
.overview-tools { display: flex; align-items: center; height: 37px; gap: 17px; padding-left: 13px; color: #6a6a6a; }
.overview-tools svg { width: 20px; height: 20px; }
.time-ruler { position: relative; border: solid #000; border-width: 2px 1px 2px 2px; background: #294b3c; }
.time-labels { display: flex; padding-top: 3px; color: #95a99f; text-align: center; }
.time-labels span { flex: 0 0 5%; }
.time-labels .edge { flex-basis: 2.5%; overflow: hidden; color: #688578; }
.time-labels .last { text-align: right; }
#timeTicks { position: absolute; left: 0; top: -2px; width: 100%; height: 33px; }
#timeTicks .tick { stroke: #9fb5aa; stroke-width: 2; shape-rendering: crispEdges; }
.playhead { position: absolute; left: -8px; bottom: 0; width: 16px; height: 15px; fill: #3296cc; z-index: 1; }
.snap { display: flex; align-items: center; padding-left: 15px; color: #6a6a6a; }
.snap svg { width: 14px; height: 16px; }
.wave { position: relative; background: #f5f6ff; border: solid #000; border-width: 0 1px 0 2px; box-shadow: inset 1px 0 #c9241d; overflow: hidden; min-height: 0; }
.wave > svg { position: absolute; inset: 0; width: 100%; height: 100%; shape-rendering: crispEdges; }
.grid-v, .grid-h { stroke: #cfe4d4; stroke-width: 2; }
.zero { stroke: #6b120f; stroke-width: 3; }
#wavePath { fill: #27453a; }
.fade { position: absolute; top: 5px; left: 18px; width: 10px; height: 11px; background: #ccc; clip-path: polygon(100% 0, 100% 100%, 0 100%); }
.fade.right { left: auto; right: 18px; clip-path: polygon(0 0, 100% 100%, 0 100%); }
.hud {
  position: absolute;
  top: 28px;
  left: 50%;
  transform: translateX(-50%);
  width: 157px;
  height: 33px;
  display: flex;
  align-items: center;
  border: 1px solid #444448;
  background: #515154;
  color: #757575;
}
.hud > svg { width: 46px; height: 28px; margin-left: 6px; margin-right: 7px; }
.gain { padding-bottom: 2px; }
.hud-grip { width: 8px; height: 30px; background: repeating-linear-gradient(#ccc 0 2px, #333 2px 4px) center / 4px 14px no-repeat #747476; }
.hud button { margin-left: auto; width: 23px; height: 25px; border-left: 1px solid #888; }
.hud button svg { width: 12px; height: 12px; fill: #a0a0a0; }
.db-ruler { position: relative; background: #202020; border: solid #000; border-width: 1px 1px 0 0; overflow: hidden; }
.db-ruler svg { position: absolute; inset: 0; width: 100%; height: 100%; fill: #8e8e8e; font-size: 14px; }
.db-ruler .tick, .meter-scale .tick { stroke: #a8a8a8; stroke-width: 2; shape-rendering: crispEdges; }
.strip { grid-column: 1 / -1; position: relative; background: #1a1a1a; border-bottom: 1px solid #131313; display: flex; align-items: center; justify-content: center; }
.strip-grip { width: 30px; height: 5px; background: linear-gradient(#1a1a1a, #1a1a1a) center / 100% 1px no-repeat, repeating-linear-gradient(90deg, #777 0 3px, #1a1a1a 3px 5px); }
.strip-arrow { position: absolute; right: 22px; width: 8px; height: 5px; background: #8a8a8a; clip-path: polygon(50% 0, 100% 100%, 0 100%); }
.transport { display: flex; align-items: center; flex: none; height: 45px; padding: 0 23px 0 13px; color: #6c6c6c; }
.time { font-size: 20px; line-height: 28px; width: 471px; padding-top: 2px; }
.transport-buttons { display: flex; gap: 17px; }
.transport-buttons svg { width: 20px; height: 20px; }
.transport-buttons svg.skip { width: 22px; }
.record { color: #6c2626; }
.zoom-buttons { display: flex; gap: 15px; margin-left: auto; }
.zoom-buttons svg { width: 22px; height: 22px; }
.zoom-buttons svg.wide { width: 26px; margin: 0 -2px; }
.thin { fill: none; stroke: currentColor; stroke-width: 1.4; }

/* History */
.history-box { display: flex; flex: none; height: 41px; margin: 6px 6px 0; border: 1px solid #191919; }
.history-box ul { flex: 1; color: #999; }
.history-box li { display: flex; align-items: center; height: 18px; padding-bottom: 3px; }
.history-box li > svg { width: 16px; height: 16px; margin: 0 9px 0 8px; }
.history-box .current { height: 21px; padding-bottom: 0; background: #404040; font-weight: bold; }
.state { width: 19px; padding-left: 2px; }
.state svg { width: 11px; height: 12px; }
.fx { width: 24px; margin-left: 9px; font: italic 17px/20px "Liberation Serif", serif; color: #ddd; }
.vscroll { width: 19px; border-left: 1px solid #191919; border-top: 3px solid #191919; }
.history-foot { display: flex; align-items: center; justify-content: space-between; flex: 1; padding: 2px 12px 0 6px; }
.history-foot svg { width: 16px; height: 17px; }

/* Levels and selection */
.bottom-right { display: flex; gap: 6px; min-width: 0; }
.levels { flex: 1; }
.meter { height: 54px; margin: 5px 8px 0 7px; border: 2px solid #171717; background: linear-gradient(#181818, #181818) right 10px top / 2px 100% no-repeat, #000; box-shadow: inset 2px 0 #a5a020; }
.meter-scale { height: 22px; padding: 0 22px 0 9px; }
.meter-scale svg { width: 100%; height: 22px; overflow: visible; fill: #909090; font-size: 11px; }
.mid { text-anchor: middle; }
.selection { flex: 0 0 388px; }
.selection table { width: 323px; margin-left: 14px; table-layout: fixed; }
.selection th:first-child, .selection thead td { width: 65px; }
.selection td, .selection th { height: 21px; }
.selection tbody th { padding-bottom: 2px; }
.selection tbody td { padding: 0 0 2px 1px; }
.selection .view > * { height: 30px; }

/* Status bar */
.statusbar { display: flex; align-items: center; height: 23px; padding: 0 59px 0 9px; background: #262626; }
.message { flex: 1; }
.cell { height: 15px; display: flex; align-items: center; padding: 0 8px 0 10px; border-right: 1px solid #1a1a1a; color: #8a8a8a; }
.cell.empty { width: 63px; border-left: 1px solid #1a1a1a; }
.cell.format { padding-left: 142px; }
.cell.length { padding-left: 22px; }
.taskbar-edge { height: 2px; background: linear-gradient(90deg, #000 60px, #333 60px 490px, #000 490px 1111px, #333 1111px 1172px, #000 1172px); }

/* Normalize dialog */
.dialog {
  position: absolute;
  top: 415px;
  left: calc(50% - 203px);
  width: 405px;
  border: 1px solid #fff;
  background: #262626;
  box-shadow: 0 4px 16px rgba(20, 20, 40, .45);
  color: #999;
}
.dialog-title { display: flex; align-items: center; justify-content: space-between; height: 37px; padding: 0 14px 0 9px; background: #fff; color: #111; font-size: 14px; }
.dialog-body { padding: 18px 26px 24px 25px; }
.row { display: flex; align-items: center; height: 37px; }
.dialog input[type="checkbox"] { appearance: none; width: 18px; height: 18px; margin-right: 4px; background: #181818; display: grid; place-items: center; }
.dialog input[type="checkbox"]:checked::before { content: ""; width: 11px; height: 11px; background: #ddd; clip-path: polygon(0 50%, 18% 45%, 38% 75%, 82% 0, 100% 0, 45% 100%, 33% 100%); }
.dialog input.focus { background: #000; border-bottom: 1px solid #3a91bd; }
.dialog input:disabled { color: #666; }
.dialog input:disabled + label { color: #5c5c5c; }
.dialog input[type="checkbox"]:disabled::before { background: #666; }
.dialog .amount { width: 68px; margin-left: 10px; color: #3a91bd; }
.dialog .bias { width: 60px; margin-left: 12px; }
.dialog input[type="radio"] { appearance: none; width: 18px; height: 18px; margin-right: 3px; border-radius: 50%; background: #181818; }
.dialog input[type="radio"]:checked { background: radial-gradient(circle, #ddd 2px, #181818 3px); }
.dialog label + input[type="radio"] { margin-left: 15px; }
.info { width: 22px; height: 22px; margin-left: auto; }
.dialog-buttons { display: flex; justify-content: flex-end; gap: 12px; padding: 21px 2px 0 0; }
.dialog-buttons button { width: 111px; height: 29px; background: #1f1f1f; color: #d0d0d0; }
.dialog-buttons .primary { background: #20607f; }
```
